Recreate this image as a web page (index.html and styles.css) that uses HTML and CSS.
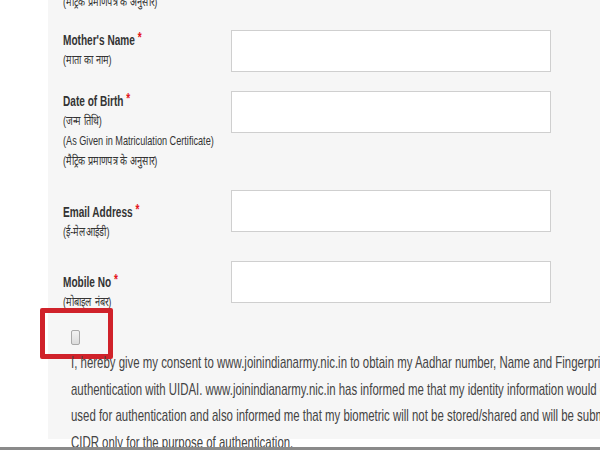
FILE: index.html
```html
<!DOCTYPE html>
<html lang="en">
<head>
	<meta charset="UTF-8">
	<title>Registration</title>
	<link rel="stylesheet" href="styles.css">
</head>
<body>
	<div class="page">
		<div class="form-panel">
			<!-- previous field, scrolled out at top -->
			<div class="prev-hint"><span class="hint">(मैट्रिक प्रमाणपत्र के अनुसार)</span></div>

			<div class="row">
				<label class="lbl">
					<span class="name">Mother's Name <b class="req">*</b></span>
					<span class="hint">(माता का नाम)</span>
				</label>
				<input type="text" class="field">
			</div>

			<div class="row">
				<label class="lbl">
					<span class="name">Date of Birth <b class="req">*</b></span>
					<span class="hint">(जन्म तिथि)</span>
					<span class="hint">(As Given in Matriculation Certificate)</span>
					<span class="hint">(मैट्रिक प्रमाणपत्र के अनुसार)</span>
				</label>
				<input type="text" class="field">
			</div>

			<div class="row">
				<label class="lbl lbl-low">
					<span class="name">Email Address <b class="req">*</b></span>
					<span class="hint">(ई-मेलआईडी)</span>
				</label>
				<input type="text" class="field">
			</div>

			<div class="row">
				<label class="lbl lbl-low2">
					<span class="name">Mobile No <b class="req">*</b></span>
					<span class="hint">(मोबाइल नंबर)</span>
				</label>
				<input type="text" class="field">
			</div>

			<div class="consent">
				<span class="chk"></span>
				<!-- highlight box round the checkbox -->
				<div class="mark"></div>
				<p class="consent-text">
					I, hereby give my consent to www.joinindianarmy.nic.in to obtain my Aadhar number, Name and Fingerprint/Iris for<br>
					authentication with UIDAI. www.joinindianarmy.nic.in has informed me that my identity information would only be<br>
					used for authentication and also informed me that my biometric will not be stored/shared and will be submitted to<br>
					CIDR only for the purpose of authentication.
				</p>
			</div>
		</div>
	</div>
	<div class="bottom-line"></div>
</body>
</html>
```

FILE: styles.css
```css
*{
	margin: 0;
	padding: 0;
	box-sizing: border-box;
}

html, body{
	overflow: hidden;
}

body{
	width: 600px;
	height: 450px;
	background-color: #fff;
	font-family: "Liberation Sans", Arial, sans-serif;
	color: #333;
}

.page{
	height: 447px;
	overflow: hidden;
	padding-left: 48px;
}

/*灰色的表单区域*/
.form-panel{
	width: 700px;
	height: 447px;
	background-color: #f6f6f6;
	padding-left: 15px;
}

.prev-hint{
	height: 20px;
	margin-top: -8px;
	margin-bottom: 18px;
	line-height: 20px;
	white-space: nowrap;
	transform: scaleX(0.72);
	transform-origin: left top;
}

.row{
	display: flex;
	align-items: flex-start;
	margin-bottom: 19px;
}

/*文字横向压窄*/
.lbl{
	width: 168px;
	flex-shrink: 0;
	display: flex;
	flex-direction: column;
	line-height: 20px;
	white-space: nowrap;
	transform: scaleX(0.72);
	transform-origin: left top;
}

.lbl-low{
	padding-top: 12px;
}

.lbl-low2{
	padding-top: 11px;
}

.name{
	display: block;
	height: 20px;
	font-size: 14px;
	font-weight: bold;
	color: #333;
}

.req{
	color: #e4141b;
	font-size: 14px;
	line-height: 0;
	vertical-align: 3px;
}

.hint{
	display: block;
	height: 20px;
	font-size: 12.7px;
	color: #333;
}

.field{
	display: block;
	width: 320px;
	height: 42px;
	border: 1px solid #cfcfcf;
	background-color: #fff;
}

/*同意条款*/
.consent{
	position: relative;
	padding-left: 8px;
	padding-top: 18px;
	margin-top: -19px;
}

.chk{
	display: block;
	width: 9px;
	height: 15px;
	border: 1px solid #a9a9a9;
	border-radius: 2px;
	background: linear-gradient(#f2f2f2, #dcdcdc);
}

.mark{
	position: absolute;
	left: -23px;
	top: -4px;
	width: 73px;
	height: 51px;
	border: 5px solid #d0222a;
	border-radius: 2px;
}

.consent-text{
	height: 106px;
	font-size: 17px;
	line-height: 26.5px;
	color: #444;
	white-space: nowrap;
	margin-top: 5px;
	transform: scaleX(0.672);
	transform-origin: left top;
}

.bottom-line{
	height: 3px;
	background-color: #8a8a8a;
}
```
